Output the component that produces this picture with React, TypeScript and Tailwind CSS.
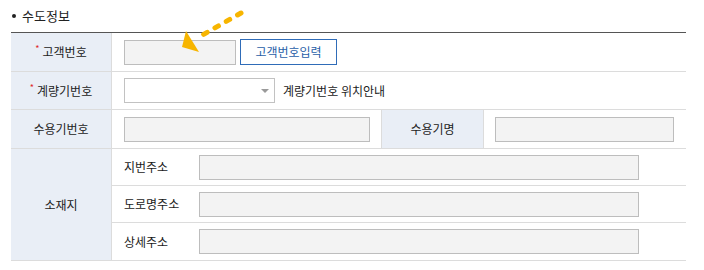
import React from 'react';

const font = { fontFamily: '"Noto Sans CJK KR", "Noto Sans", sans-serif' };

function Label({ text, required }: { text: string; required?: boolean }) {
    return (
        <div className="flex w-[101px] shrink-0 items-center justify-center border-r border-[#dcdcdc] bg-[#e9eef6] text-[12px] text-[#222]">
            {required && <span className="mr-[3px] -mt-[6px] text-[9px] text-[#e0262b]">*</span>}
            {text}
        </div>
    );
}

function ReadOnlyInput({ className }: { className: string }) {
    return <div className={`h-[25px] border border-[#bdbdbd] bg-[#f3f3f3] ${className}`} />;
}

function AddressRow({ label, last }: { label: string; last?: boolean }) {
    return (
        <div className={`flex h-[37px] items-center pl-[12px] ${last ? '' : 'border-b border-[#dcdcdc]'}`}>
            <span className="w-[75px] text-[12px] text-[#1a1a1a]">{label}</span>
            <ReadOnlyInput className="w-[440px]" />
        </div>
    );
}

function Arrow() {
    return (
        <svg className="pointer-events-none absolute left-0 top-0" width="260" height="60" viewBox="0 0 260 60">
            <line x1="241" y1="13" x2="199" y2="37" stroke="#f7b500" strokeWidth="5" strokeLinecap="round" strokeDasharray="4 9" />
            <polygon points="182,47 186,31 199,52" fill="#f7b500" />
        </svg>
    );
}

export default function App() {
    return (
        <div className="relative h-[270px] w-[704px] bg-white" style={font}>
            <div className="ml-[11px] w-[675px]">
                <div className="flex h-[32px] items-center pb-[1px] text-[13px] text-[#222]">
                    <span className="mr-[6px] ml-[1px] h-[4px] w-[4px] rounded-full bg-[#222]" />
                    수도정보
                </div>
                <div className="border-t border-[#555]">
                    <div className="flex h-[39px] border-b border-[#dcdcdc]">
                        <Label text="고객번호" required />
                        <div className="flex items-center gap-[4px] pl-[12px]">
                            <ReadOnlyInput className="w-[112px]" />
                            <button className="h-[26px] w-[97px] border border-[#2f6cb8] bg-white text-[12px] text-[#2a5fa8]">
                                고객번호입력
                            </button>
                        </div>
                    </div>
                    <div className="flex h-[38px] border-b border-[#dcdcdc]">
                        <Label text="계량기번호" required />
                        <div className="flex items-center gap-[8px] pl-[12px]">
                            <div className="flex h-[25px] w-[151px] items-center justify-end border border-[#c2c2c2] bg-white pr-[5px]">
                                <span className="h-0 w-0 border-x-[4px] border-t-[4px] border-x-transparent border-t-[#9a9a9a]" />
                            </div>
                            <span className="text-[12px] text-[#222]">계량기번호 위치안내</span>
                        </div>
                    </div>
                    <div className="flex h-[39px] border-b border-[#dcdcdc]">
                        <Label text="수용기번호" />
                        <div className="flex w-[269px] items-center pl-[12px]">
                            <ReadOnlyInput className="w-[246px]" />
                        </div>
                        <div className="flex w-[103px] items-center justify-center border-x border-[#dcdcdc] bg-[#e9eef6] text-[12px] text-[#222]">
                            수용기명
                        </div>
                        <div className="flex items-center pl-[11px]">
                            <ReadOnlyInput className="w-[179px]" />
                        </div>
                    </div>
                    <div className="flex border-b border-[#dcdcdc]">
                        <Label text="소재지" />
                        <div className="flex-1">
                            <AddressRow label="지번주소" />
                            <AddressRow label="도로명주소" />
                            <AddressRow label="상세주소" last />
                        </div>
                    </div>
                </div>
            </div>
            <Arrow />
        </div>
    );
}
